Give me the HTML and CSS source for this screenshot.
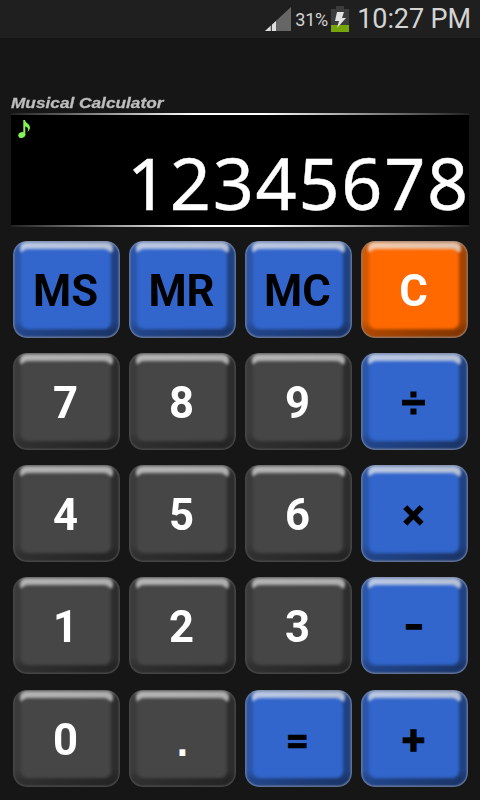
FILE: index.html
```html
<!DOCTYPE html>
<html lang="en">
<head>
<meta charset="utf-8">
<title>Musical Calculator</title>
<link rel="stylesheet" href="styles.css">
</head>
<body>
<header class="status">
  <svg class="signal" width="26" height="24" viewBox="0 0 26 24"><path d="M26 0V24H0Z" fill="#666"/><path d="M11 14V24H0Z" fill="#ddd"/><path d="M6.300 17v7" stroke="#222" stroke-width="1"/></svg>
  <span class="percent">31%</span>
  <svg class="battery" width="18" height="26" viewBox="0 0 18 26"><path d="M5 0h8v3h5v23H0V3h5z" fill="#3c3c3c"/><path d="M0 19h18v7H0z" fill="#76a60b"/><path d="M6 6h7l-2 6h4L6 22l2-7H4z" fill="#e2e2e2"/></svg>
  <span class="clock">10:27 PM</span>
</header>
<main>
  <h1><span>Musical Calculator</span></h1>
  <section class="display">
    <svg class="note" width="13" height="19" viewBox="0 0 13 19"><ellipse cx="3.8" cy="15" rx="3.6" ry="2.9" transform="rotate(-20 3.8 15)" fill="#83f357"/><path d="M5.3 0H7c.2 3.2 5 3.800 5 7.500 0 1.800-1 3-2.500 4.500C11 8.500 9.500 7 7.300 6.500V15H5.300z" fill="#83f357"/></svg>
    <output>12345678</output>
  </section>
  <section class="keys">
    <button class="key blue"><span>MS</span></button><button class="key blue"><span>MR</span></button><button class="key blue"><span>MC</span></button><button class="key orange"><span>C</span></button>
    <button class="key"><span>7</span></button><button class="key"><span>8</span></button><button class="key"><span>9</span></button><button class="key blue"><span class="divide">÷</span></button>
    <button class="key"><span>4</span></button><button class="key"><span>5</span></button><button class="key"><span>6</span></button><button class="key blue"><span class="times">×</span></button>
    <button class="key"><span>1</span></button><button class="key"><span>2</span></button><button class="key"><span>3</span></button><button class="key blue"><span class="minus">−</span></button>
    <button class="key"><span>0</span></button><button class="key"><span class="point">.</span></button><button class="key blue"><span class="equals">=</span></button><button class="key blue"><span class="plus">+</span></button>
  </section>
</main>
</body>
</html>
```
FILE: styles.css
```css
* { box-sizing: border-box; }
body {
  margin: 0;
  height: 800px;
  overflow: hidden;
  background: #161616;
  font-family: Roboto, sans-serif;
}
.status {
  height: 38px;
  padding-right: 9px;
  display: flex;
  align-items: center;
  justify-content: flex-end;
  background: #1f1f1f;
  color: #d4d4d4;
}
.signal { margin-right: 4px; }
.percent { width: 32px; font-size: 18px; letter-spacing: -.2px; margin-right: 4px; padding-top: 1px; }
.battery { margin-right: 8px; }
.clock { font-size: 27px; line-height: 36px; letter-spacing: -.1px; }
main { padding: 56px 11px 0; }
h1 {
  margin: 0;
  height: 19px;
  font: italic bold 15px/18px "Liberation Sans", sans-serif;
  color: #bdbdbd;
  -webkit-text-stroke: .3px #bdbdbd;
}
h1 span { display: inline-block; transform: scaleX(1.15); transform-origin: left; }
.display {
  height: 114px;
  width: 458px;
  padding: 7px 1px 0 7px;
  background:
    linear-gradient(90deg, #222, #fff 40%, #fff 55%, #222) top / 100% 2px no-repeat,
    linear-gradient(90deg, #222, #fff 40%, #fff 55%, #222) bottom / 100% 2px no-repeat,
    #000;
}
.note { display: block; }
output {
  display: block;
  margin-top: 2px;
  text-align: right;
  color: #fff;
  font: 72px/82px "Noto Sans", sans-serif;
  letter-spacing: 1.700px;
  margin-right: -2px;
  -webkit-text-stroke: .4px #fff;
}
.keys {
  display: grid;
  grid-template-columns: repeat(4, 107px);
  grid-auto-rows: 97px;
  gap: 15.250px 9px;
  padding: 13.500px 0 0 1.500px;
}
.key {
  --base: #3266cc;
  --label: #000;
  --rim: #66779a;
  --top: rgba(255, 255, 255, .68);
  position: relative;
  isolation: isolate;
  overflow: hidden;
  padding: 2px 2px 0 0;
  border: 0;
  border-radius: 14px;
  color: var(--label);
  font: bold 45px/95px Roboto, sans-serif;
  background:
    linear-gradient(transparent 82%, rgba(0, 0, 0, .2) 93%),
    linear-gradient(90deg, rgba(0, 0, 0, .16) 8%, rgba(0, 0, 0, .36) 92%),
    var(--base);
  box-shadow: inset 0 0 1.500px 1.500px var(--rim);
}
.key span { display: block; transform: scaleX(.97); }
.key .divide { font-family: "Liberation Sans", sans-serif; -webkit-text-stroke: 1px; }
.key .minus { transform: translateY(1px) scale(.85, 1.150); }
.key .times { transform: scale(.92); -webkit-text-stroke: 1px; }
.key .equals { transform: scale(.9) translateY(1px); -webkit-text-stroke: .8px; }
.key .plus { transform: scale(.96) translateY(1px); -webkit-text-stroke: .5px; }
.key .point { font-family: "Liberation Sans", sans-serif; transform: translate(1px, 1px) scale(.9, 1); }
.key:not(.blue, .orange) {
  --base: #464646;
  --label: #fff;
  --rim: #484848;
  --top: rgba(255, 255, 255, .62);
}
.key.orange { --base: #ff6900; --label: #fff; --rim: #96735c; }
.key::before {
  content: "";
  position: absolute;
  inset: 1px 7px auto;
  height: 11px;
  z-index: -2;
  border-radius: 6px 6px 4px 4px;
  background: var(--top);
  filter: blur(1.500px);
}
.key::after {
  content: "";
  position: absolute;
  inset: 8px 9px 9px 8px;
  z-index: -1;
  border-radius: 7px;
  background: var(--base);
  filter: blur(1.500px);
}
```
